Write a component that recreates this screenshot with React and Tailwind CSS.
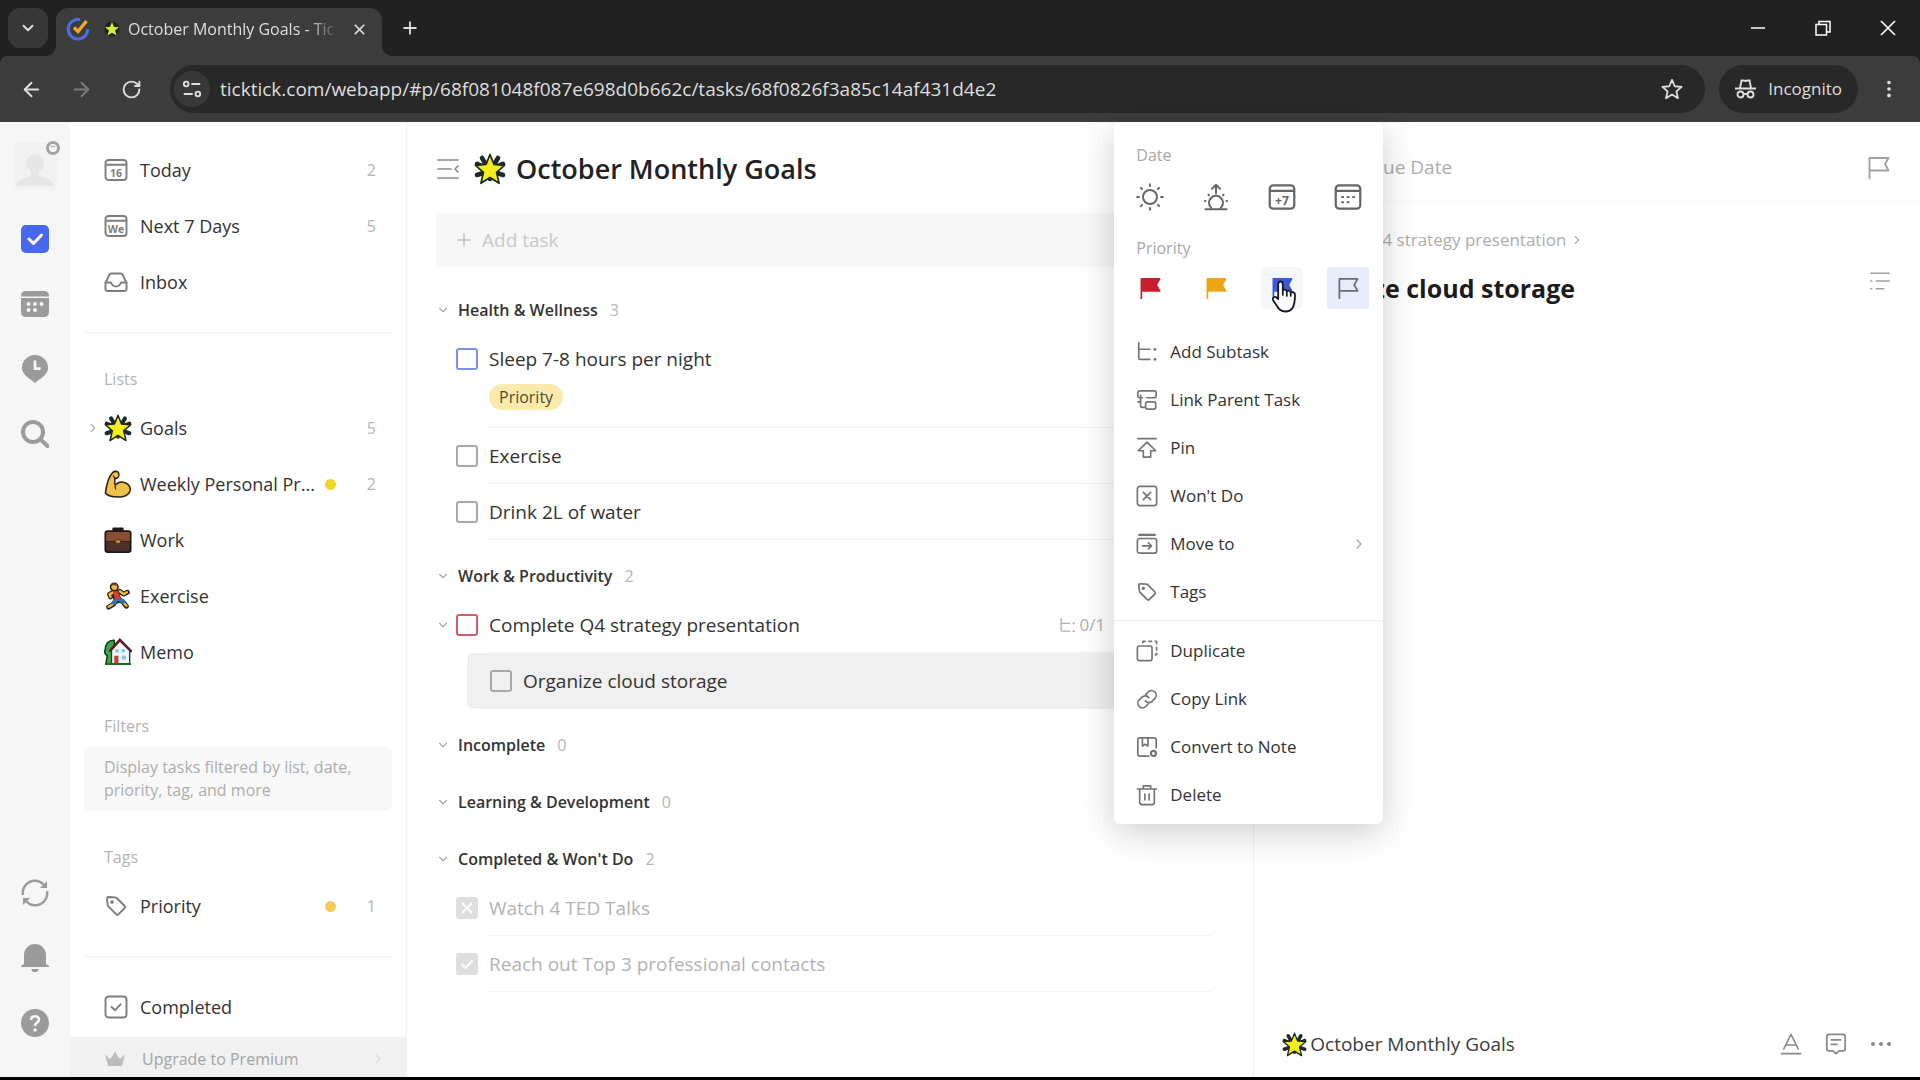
import React from "react";
import {
  ArrowLeft,
  ArrowRight,
  ChevronDown,
  ChevronRight,
  EllipsisVertical,
  Plus,
  RotateCw,
  X,
} from "lucide-react";

// Small wrapper so that every line icon shares the same stroke settings
const Icon = ({ size = 24, sw = 1.8, className = "", children }) => (
  <svg
    width={size}
    height={size}
    viewBox="0 0 24 24"
    fill="none"
    stroke="currentColor"
    strokeWidth={sw}
    strokeLinecap="round"
    strokeLinejoin="round"
    aria-hidden="true"
    className={`shrink-0 ${className}`}
  >
    {children}
  </svg>
);

const StarEmoji = ({ size = 28 }) => (
  <svg width={size} height={size} viewBox="0 0 32 32" className="shrink-0" aria-hidden="true">
    <g stroke="#1d2a2c" strokeWidth="4.6" strokeLinecap="round">
      <path d="M8 5l3 5M24 5l-3 5M3 11l5 2M29 11l-5 2M3 22l6-2M29 22l-6-2M16 26v-3" />
    </g>
    <path
      d="M16 1.5l4 10 10.5.8-8 7 2.6 11L16 24.5 6.9 30.3l2.6-11-8-7 10.500-.8z"
      fill="#f4ee1c"
      stroke="#1d2a10"
      strokeWidth="1.7"
      strokeLinejoin="round"
    />
  </svg>
);

const MuscleEmoji = () => (
  <svg width="28" height="28" viewBox="0 0 30 30" className="shrink-0" aria-hidden="true">
    <path
      d="M9.5 2.5c2-1.6 5-1.3 6 .5 1 1.9.3 4.5-1.2 5.5-1 .7-2 .6-2.6.4-.6 2.6-.4 5 .5 7.2 2.5-3 6.6-4 10.6-2.5 4.7 1.8 6.2 6 4.9 9.4-1.5 3.900-6.300 6-12.500 6-6.500 0-11.500-1.400-13.700-4.300C2.500 16.500 5 7.500 9.500 2.500z"
      fill="#f2c04c"
      stroke="#2b2210"
      strokeWidth="1.7"
      strokeLinejoin="round"
    />
    <path d="M12.2 16.1c-.5 1.5-.3 3 .4 4.2M10 6.5l2 2.4" fill="none" stroke="#2b2210" strokeWidth="1.3" strokeLinecap="round" />
  </svg>
);

const BriefcaseEmoji = () => (
  <svg width="28" height="28" viewBox="0 0 30 30" className="shrink-0" aria-hidden="true">
    <path d="M10 6V2.5h10V6" fill="#2d1d1a" stroke="#20171a" strokeWidth="2" strokeLinejoin="round" />
    <rect x="1.5" y="5.5" width="27" height="22.5" rx="2.5" fill="#4e2f28" stroke="#20171a" strokeWidth="2" />
    <path d="M2.5 7.5q0-1 1-1h23q1 0 1 1v9h-25z" fill="#8a4f33" />
    <path d="M2.5 16.5h25" stroke="#2b1a18" strokeWidth="1" />
    <path d="M11.5 15h7l-1.5 3.5h-4z" fill="#c99a2e" stroke="#3a2415" strokeWidth=".8" />
  </svg>
);

const RunnerEmoji = () => (
  <svg width="28" height="28" viewBox="0 0 30 30" className="shrink-0" aria-hidden="true">
    <g fill="none" strokeLinecap="round" strokeLinejoin="round">
      <path d="M13 19l-3 5-5 3M15 18l5 3 4 5M12 10l-6 3 1 3M17 10l4 3 4-2" stroke="#23211c" strokeWidth="5.2" />
      <path d="M12 11l2.5 8" stroke="#23211c" strokeWidth="8" />
      <path d="M12 10l-6 3 1 3M17 10l4 3 3.5-2" stroke="#eebc46" strokeWidth="2.6" />
      <path d="M13 19l-3 4.5-5 3M20 21l4 4.5" stroke="#eebc46" strokeWidth="2.6" />
      <path d="M14 18l-3.5 4.5M15 18l6 3" stroke="#2779c4" strokeWidth="4" />
      <path d="M12.5 11.5l2 5.5" stroke="#dd3b3b" strokeWidth="5.5" />
    </g>
    <circle cx="11" cy="5.3" r="4" fill="#eebc46" stroke="#3a2415" strokeWidth="1.7" />
    <path d="M7 5c0-5 8-5 8 0-2-2-6-2-8 0z" fill="#6a4423" />
  </svg>
);

const HouseEmoji = () => (
  <svg width="28" height="28" viewBox="0 0 30 30" className="shrink-0" aria-hidden="true">
    <path
      d="M11 2.5C5 2 1 7 1.5 12c-1.5 3-.5 5.5 2 7L2 28h10z"
      fill="#3aa84a"
      stroke="#173d1c"
      strokeWidth="1.7"
      strokeLinejoin="round"
    />
    <path d="M8 13l9-10 10.5 10v14.5H8z" fill="#e9f7fb" stroke="#2b3b40" strokeWidth="1.5" />
    <path d="M6.5 13.5L17 2l12 12" fill="none" stroke="#611d22" strokeWidth="2.6" strokeLinecap="round" />
    <rect x="11" y="19" width="4.5" height="8.5" fill="#c8403a" />
    <rect x="19" y="19" width="4.5" height="4" fill="#86c8d8" />
    <rect x="12" y="12" width="3.5" height="3.5" fill="#86c8d8" />
    <rect x="19" y="12" width="3.5" height="3.5" fill="#86c8d8" />
    <path d="M1 28h28" stroke="#1f6b2c" strokeWidth="2" />
  </svg>
);

const TagIcon = ({ size = 24 }) => (
  <Icon size={size} sw={1.9}>
    <path d="M3 4.5Q3 3 4.5 3l6.800.4q.8 0 1.400.6l8 8q1 1 0 2l-6.300 6.300q-1 1-2 0l-8-8q-.6-.6-.7-1.400z" />
    <circle cx="8" cy="8" r=".9" fill="currentColor" />
  </Icon>
);

const CalendarBox = ({ text, size = 24 }) => (
  <Icon size={size} sw={1.9}>
    <rect x="1.5" y="2" width="21" height="20" rx="3" />
    <path d="M2 6.8h20" />
    <text
      x="12"
      y="18.5"
      textAnchor="middle"
      fontSize="10.5"
      fontWeight="700"
      fill="currentColor"
      stroke="none"
    >
      {text}
    </text>
  </Icon>
);

const FlagIcon = ({ size = 24, fill = "none", color = "currentColor" }) => (
  <svg width={size} height={size} viewBox="0 0 24 24" className="shrink-0" aria-hidden="true">
    <path
      d="M2.5 23V2h19l-3.5 6.3 3.5 6.2h-19"
      fill={fill}
      stroke={color}
      strokeWidth="1.8"
      strokeLinejoin="round"
    />
  </svg>
);

const SubtaskIcon = ({ size = 24 }) => (
  <Icon size={size} sw={1.9}>
    <path d="M3 2v16.500q0 1.500 1.500 1.500H15M3 9h12" />
    <path d="M20.5 9h.2M20.5 20h.2" strokeWidth="3" />
  </Icon>
);

const icons = {
  parent: (
    <Icon size={22}>
      <path d="M7 9.5H4Q2 9.5 2 7.5V4q0-2 2-2h16q2 0 2 2v3.5q0 2-2 2h-8.5M5 6.5V18q0 2 2 2h3" />
      <path d="M2 14h3" />
      <rect x="10.5" y="14" width="11" height="8" rx="2" />
    </Icon>
  ),
  pin: (
    <Icon size={22}>
      <path d="M2 1.8h20M12 5.500L2.500 15H8v7h8v-7h5.500z" />
    </Icon>
  ),
  wont: (
    <Icon size={22}>
      <rect x="1.5" y="1.5" width="21" height="21" rx="2.5" />
      <path d="M8 8l8 8M16 8l-8 8" />
    </Icon>
  ),
  move: (
    <Icon size={22}>
      <rect x="1.5" y="6" width="21" height="16" rx="2.5" />
      <path d="M3.5 2h17" strokeWidth="2.6" />
      <path d="M7 14h10M13.5 10.800L17 14l-3.500 3.200" />
    </Icon>
  ),
  duplicate: (
    <Icon size={22}>
      <rect x="1.5" y="6.5" width="16" height="16" rx="2" />
      <path d="M7.5 3V1.5H10M14 1.5h3M21 1.5h1.500V4M22.500 8v3M22.500 14.500V16H21" />
    </Icon>
  ),
  copy: (
    <Icon size={22}>
      <path d="M10 14a5 5 0 0 0 7.500.5l3-3a5 5 0 0 0-7-7.200l-3 3" />
      <path d="M14 10.500a5 5 0 0 0-7.500-.5l-3 3a5 5 0 0 0 7 7.200l3-3" />
    </Icon>
  ),
  note: (
    <Icon size={22}>
      <path d="M14 22H4q-2 0-2-2V4q0-2 2-2h16q2 0 2 2v9" />
      <path d="M7 2v9l3-2 3 2V2" />
      <circle cx="19" cy="19" r="2.8" strokeWidth="2.4" />
    </Icon>
  ),
  trash: (
    <Icon size={22}>
      <path d="M1.5 5.500h21M8 5V2h8v3M4 5.500V20q0 2.500 2.500 2.500h11Q20 22.500 20 20V5.500M9.700 11v6.500M14.300 11v6.500" />
    </Icon>
  ),
};

const menuTop = [
  { label: "Add Subtask", icon: <SubtaskIcon size={22} /> },
  { label: "Link Parent Task", icon: icons.parent },
  { label: "Pin", icon: icons.pin },
  { label: "Won't Do", icon: icons.wont },
  { label: "Move to", icon: icons.move, arrow: true },
  { label: "Tags", icon: <TagIcon size={22} /> },
];

const menuBottom = [
  { label: "Duplicate", icon: icons.duplicate },
  { label: "Copy Link", icon: icons.copy },
  { label: "Convert to Note", icon: icons.note },
  { label: "Delete", icon: icons.trash },
];

const BrowserChrome = () => (
  <header className="bg-[#212121] text-[#dedede]">
    <div className="flex h-14 items-end justify-between">
      <div className="flex h-12 items-stretch">
        <button
          type="button"
          aria-label="Search tabs"
          className="mb-2 ml-2 mr-2 flex w-10 items-center justify-center rounded-xl bg-[#373737]"
        >
          <ChevronDown size={18} strokeWidth={2.6} />
        </button>
        <div className="relative flex w-[326px] items-center rounded-t-xl bg-[#3c3c3c] pb-[6px] pl-[10px] pr-[14px]">
          <svg className="absolute -left-3 bottom-0" width="12" height="12" aria-hidden="true">
            <path d="M12 0v12H0Q12 12 12 0z" fill="#3c3c3c" />
          </svg>
          <svg className="absolute -right-3 bottom-0" width="12" height="12" aria-hidden="true">
            <path d="M0 0v12h12Q0 12 0 0z" fill="#3c3c3c" />
          </svg>
          <svg width="24" height="24" viewBox="0 0 24 24" fill="none" className="shrink-0" aria-hidden="true">
            <path d="M14 2.6A9.8 9.8 0 1 0 21.800 12" stroke="#4b6be0" strokeWidth="3" />
            <path d="M8 10.500l4 4L20.500 4" stroke="#f0a92a" strokeWidth="3.4" />
          </svg>
          <span className="ml-[14px] mr-2">
            <svg width="16" height="16" viewBox="0 0 16 16" aria-hidden="true">
              <circle cx="8" cy="8" r="7.5" fill="#1e2414" />
              <path d="M8 1l2 5 5 .3-4 3.200 1.500 5L8 11.700 3.500 14.500 5 9.500 1 6.300 6 6z" fill="#d6f03a" />
            </svg>
          </span>
          <span className="flex-1 overflow-hidden whitespace-nowrap text-[16px] [mask-image:linear-gradient(to_right,black_85%,transparent)]">
            October Monthly Goals - Tic
          </span>
          <button type="button" aria-label="Close tab" className="ml-3">
            <X size={17} strokeWidth={2.4} />
          </button>
        </div>
        <button type="button" aria-label="New tab" className="mb-2 ml-[18px]">
          <Plus size={20} strokeWidth={2.2} />
        </button>
      </div>
      <div className="flex h-full items-center gap-[49px] pr-6">
        <button type="button" aria-label="Minimize">
          <svg width="16" height="16" stroke="#fff" strokeWidth="1.5" aria-hidden="true">
            <path d="M1 8h14" />
          </svg>
        </button>
        <button type="button" aria-label="Restore">
          <svg width="16" height="16" stroke="#fff" strokeWidth="1.5" fill="none" aria-hidden="true">
            <path d="M1 4.500h10.500V15H1zM4 4.500V1.500h11V12h-3.500" />
          </svg>
        </button>
        <button type="button" aria-label="Close window">
          <svg width="16" height="16" stroke="#fff" strokeWidth="1.6" aria-hidden="true">
            <path d="M1 1l14 14M15 1L1 15" />
          </svg>
        </button>
      </div>
    </div>
    <div className="flex h-[66px] items-center rounded-t-lg bg-[#3c3c3c] px-5">
      <button type="button" aria-label="Back">
        <ArrowLeft size={23} />
      </button>
      <button type="button" aria-label="Forward" className="ml-[27px] text-[#7b7b7b]">
        <ArrowRight size={23} />
      </button>
      <button type="button" aria-label="Reload" className="ml-7">
        <RotateCw size={21} strokeWidth={2.2} />
      </button>
      <div className="ml-7 flex h-12 flex-1 items-center rounded-full bg-[#282828] pl-1 pr-[22px]">
        <button
          type="button"
          aria-label="Site information"
          className="flex h-9 w-9 items-center justify-center rounded-full bg-[#383838]"
        >
          <Icon size={20} sw={2.2}>
            <circle cx="5" cy="6" r="2.8" />
            <path d="M12 6h9M3 18h9" />
            <circle cx="19" cy="18" r="2.8" />
          </Icon>
        </button>
        <input
          type="text"
          aria-label="Address bar"
          readOnly
          value="ticktick.com/webapp/#p/68f081048f087e698d0b662c/tasks/68f0826f3a85c14af431d4e2"
          className="ml-[10px] min-w-0 flex-1 bg-transparent text-[19px] outline-none"
        />
        <button type="button" aria-label="Bookmark this tab">
          <Icon size={22} sw={2}>
            <path d="M12 2l3 7 7.500.6-5.700 5 1.700 7.400L12 18l-6.500 4 1.700-7.400-5.700-5L9 9z" />
          </Icon>
        </button>
      </div>
      <div className="ml-[14px] flex h-12 items-center gap-3 rounded-full bg-[#282828] px-4 text-[17px]">
        <svg width="21" height="20" viewBox="0 0 21 20" fill="none" stroke="currentColor" strokeWidth="1.9" aria-hidden="true">
          <path d="M0 9.500h21M5 9l1.500-7.500h2L10.500 2l2-.5h2L16 9" />
          <circle cx="5.5" cy="15.5" r="3" />
          <circle cx="15.5" cy="15.5" r="3" />
          <path d="M8.500 15h4" />
        </svg>
        Incognito
      </div>
      <button type="button" aria-label="Menu" className="ml-5">
        <EllipsisVertical size={22} />
      </button>
    </div>
  </header>
);

const Rail = () => (
  <nav aria-label="Modules" className="flex w-[70px] shrink-0 flex-col items-center bg-[#f6f6f6] pb-10 pt-5 text-[#9b9b9b]">
    <div className="relative mb-[35px] h-12 w-11 rounded-md bg-[#f2f2f2]">
      <svg viewBox="0 0 44 48" className="h-12 w-11" fill="#e6e6e6" aria-label="Profile" role="img">
        <circle cx="22" cy="21" r="9" />
        <path d="M18 28h8v6q11 1 14 8v2H4v-2q3-7 14-8z" />
      </svg>
      <svg width="16" height="16" viewBox="0 0 16 16" className="absolute -right-1 -top-[2px]" aria-hidden="true">
        <circle cx="8" cy="8" r="5.5" fill="#f6f6f6" stroke="#a2a2a2" strokeWidth="3" />
        <path d="M5.500 6l2.500 1 2.500-1" stroke="#a2a2a2" strokeWidth="1" fill="none" />
      </svg>
    </div>
    <div className="flex flex-col gap-[37px]">
      <button type="button" aria-label="Tasks">
        <svg width="28" height="28" viewBox="0 0 28 28" aria-hidden="true">
          <rect width="28" height="28" rx="5" fill="#4868ef" />
          <path d="M8 14l4.500 4.500L20.500 10" fill="none" stroke="#fff" strokeWidth="3" strokeLinecap="round" strokeLinejoin="round" />
        </svg>
      </button>
      <button type="button" aria-label="Calendar">
        <svg width="28" height="28" viewBox="0 0 28 28" fill="currentColor" aria-hidden="true">
          <path d="M0 6q0-5 5-5h18q5 0 5 5v.5H0zM0 8h28v14q0 5-5 5H5q-5 0-5-5z" />
          <g fill="#f6f6f6">
            <circle cx="7.5" cy="14" r="2" />
            <circle cx="14" cy="14" r="2" />
            <circle cx="20.5" cy="14" r="2" />
            <circle cx="7.5" cy="20" r="2" />
            <circle cx="14" cy="20" r="2" />
          </g>
        </svg>
      </button>
      <button type="button" aria-label="Pomodoro">
        <svg width="28" height="28" viewBox="0 0 28 30" aria-hidden="true">
          <path d="M14 0a14 14 0 0 1 14 14c0 7-8 11-14 16C8 25 0 21 0 14A14 14 0 0 1 14 0z" fill="currentColor" />
          <path d="M14 6v8.500h6" fill="none" stroke="#f6f6f6" strokeWidth="3" />
        </svg>
      </button>
      <button type="button" aria-label="Search">
        <svg width="28" height="28" viewBox="0 0 28 28" fill="none" stroke="currentColor" strokeWidth="4" aria-hidden="true">
          <circle cx="12" cy="12" r="10" />
          <path d="M19.500 19.500l7 6.500" strokeLinecap="round" />
        </svg>
      </button>
    </div>
    <div className="mt-auto flex flex-col gap-[37px]">
      <button type="button" aria-label="Sync">
        <svg width="28" height="28" viewBox="0 0 28 28" fill="none" stroke="currentColor" strokeWidth="2.5" aria-hidden="true">
          <path d="M2 16A12 12 0 0 1 23 6M26 12A12 12 0 0 1 5 22" />
          <path d="M26 2v7h-7zM2 26v-7h7z" fill="currentColor" stroke="none" />
        </svg>
      </button>
      <button type="button" aria-label="Notifications">
        <svg width="28" height="28" viewBox="0 0 28 28" fill="currentColor" aria-hidden="true">
          <path d="M3 20V11a11 11 0 0 1 22 0v9l3 2v1H0v-1zM10 25h8q-1.500 3.500-4 3.500T10 25z" />
        </svg>
      </button>
      <button type="button" aria-label="Help">
        <svg width="28" height="28" viewBox="0 0 28 28" aria-hidden="true">
          <circle cx="14" cy="14" r="14" fill="currentColor" />
          <path d="M10 11c0-5 8-5 8-.5 0 3-4 3-4 6.500" fill="none" stroke="#f6f6f6" strokeWidth="2.6" />
          <circle cx="14" cy="21" r="1.8" fill="#f6f6f6" />
        </svg>
      </button>
    </div>
  </nav>
);

const SideRow = ({ icon, label, count, dot, expandable }) => (
  <a href="#list" className="flex h-14 items-center pl-4 pr-[30px] text-[18px] text-[#333]">
    <span className="flex w-[18px] shrink-0 text-[#aaa]">
      {expandable && <ChevronRight size={14} />}
    </span>
    <span className="flex w-9 shrink-0 text-[#7d7d7d]">{icon}</span>
    <span className="min-w-0 flex-1 whitespace-nowrap">{label}</span>
    <span className={`ml-1 h-[11px] w-[11px] shrink-0 rounded-full ${dot || "invisible"}`} />
    <span className="w-10 shrink-0 text-right text-[16px] text-[#b5b5b5]">{count}</span>
  </a>
);

const SideLabel = ({ children }) => (
  <h2 className="mb-[9px] mt-[34px] pl-[34px] text-[16px] font-medium leading-6 text-[#b3b3b3]">{children}</h2>
);

const Sidebar = () => (
  <aside className="flex w-[337px] shrink-0 flex-col border-r border-[#f2f2f2] bg-white pt-5">
    <SideRow icon={<CalendarBox text="16" />} label="Today" count={2} />
    <SideRow icon={<CalendarBox text="We" />} label="Next 7 Days" count={5} />
    <SideRow
      icon={
        <Icon size={24} sw={1.9}>
          <path d="M1.500 13L5.500 4.500Q6 3.500 7 3.500h10q1 0 1.500 1l4 8.500v6q0 2-2 2h-17q-2 0-2-2z" />
          <path d="M1.500 12.500H7q1.500 4 5 4t5-4h5.500" />
        </Icon>
      }
      label="Inbox"
    />
    <hr className="mx-[14px] mt-[22px] border-[#f3f3f3]" />
    <SideLabel>Lists</SideLabel>
    <SideRow icon={<StarEmoji />} label="Goals" count={5} expandable />
    <SideRow icon={<MuscleEmoji />} label="Weekly Personal Pr..." count={2} dot="bg-[#f0d626]" />
    <SideRow icon={<BriefcaseEmoji />} label="Work" />
    <SideRow icon={<RunnerEmoji />} label="Exercise" />
    <SideRow icon={<HouseEmoji />} label="Memo" />
    <SideLabel>Filters</SideLabel>
    <p className="mx-[14px] rounded-md bg-[#f8f8f8] py-[9px] pl-5 pr-6 text-[16px] leading-[23px] text-[#adadad]">
      Display tasks filtered by list, date, priority, tag, and more
    </p>
    <SideLabel>Tags</SideLabel>
    <SideRow icon={<TagIcon />} label="Priority" count={1} dot="bg-[#f3cc5b]" />
    <hr className="mx-[14px] my-[22px] border-[#f3f3f3]" />
    <SideRow
      icon={
        <Icon size={24} sw={1.9}>
          <rect x="1.5" y="1.5" width="21" height="21" rx="3" />
          <path d="M7.500 12l3.500 3.300 5.500-6" />
        </Icon>
      }
      label="Completed"
    />
    <a href="#premium" className="mt-auto flex h-10 items-center bg-[#f1f1f1] pl-[34px] pr-5 pt-1 text-[16px] text-[#a5a5a5]">
      <svg width="22" height="20" viewBox="0 0 22 20" fill="#bcbcbc" aria-hidden="true">
        <path d="M1 5l4.500 5L8 8l3-6 3 6 2.500 2L21 5l-3 12H4z" />
      </svg>
      <span className="ml-4 flex-1">Upgrade to Premium</span>
      <ChevronRight size={16} className="text-[#d9d9d9]" />
    </a>
  </aside>
);

const Group = ({ title, count, children }) => (
  <section>
    <h2 className="flex h-[42px] items-center text-[16px] font-semibold text-[#333]">
      <button type="button" aria-label={`Toggle ${title}`} className="mr-2 w-[14px] text-[#a5a5a5]">
        <ChevronDown size={14} />
      </button>
      {title}
      <span className="ml-3 font-normal text-[#b5b5b5]">{count}</span>
    </h2>
    {children}
  </section>
);

const Task = ({ id, title, border = "border-[#a8a8a8]", tag, done, open, meta, sub }) => (
  <div className={`flex pr-[14px] ${sub ? "ml-[31px] rounded-md bg-[#f0f0f0] pl-[23px]" : ""}`}>
    {!sub && (
      <span className="flex h-14 w-3 shrink-0 items-center text-[#a5a5a5]">
        {open && <ChevronDown size={14} className="shrink-0" />}
      </span>
    )}
    <span className={`relative flex h-14 w-[22px] shrink-0 items-center ${sub ? "" : "ml-2"}`}>
      <input
        id={id}
        type="checkbox"
        defaultChecked={Boolean(done)}
        className={`h-[22px] w-[22px] appearance-none rounded-[3px] border-2 ${done ? "border-[#dedede] bg-[#dedede]" : border}`}
      />
      {done && (
        <svg
          viewBox="0 0 22 22"
          className="pointer-events-none absolute inset-x-0 top-[17px] h-[22px] w-[22px]"
          fill="none"
          stroke="#fff"
          strokeWidth="2"
          aria-hidden="true"
        >
          <path d={done === "wont" ? "M6 6l10 10M16 6L6 16" : "M5.500 11l4 4 7-7.500"} />
        </svg>
      )}
    </span>
    <div className={`ml-[11px] min-w-0 flex-1 border-b pb-[13px] pt-[14px] ${sub ? "border-transparent" : "border-[#f4f4f4]"}`}>
      <div className="flex items-center justify-between">
        <label htmlFor={id} className={`text-[19px] leading-7 ${done ? "text-[#b3b3b3]" : "text-[#333]"}`}>
          {title}
        </label>
        {meta}
      </div>
      {tag && (
        <div className="mb-1 mt-[11px] flex">
          <span className="rounded-full bg-[#faebad] px-[10px] text-[16px] leading-[26px] text-[#514a30]">{tag}</span>
        </div>
      )}
    </div>
  </div>
);

const DateButton = ({ label, children }) => (
  <button type="button" aria-label={label} className="flex h-[42px] w-[42px] items-center justify-center text-[#666]">
    {children}
  </button>
);

const MenuItem = ({ icon, label, arrow }) => (
  <li>
    <button type="button" className="flex h-12 w-full items-center pl-[22px] pr-4 text-[17px] text-[#333]">
      <span className="mr-3 flex text-[#747474]">{icon}</span>
      <span className="flex-1 text-left">{label}</span>
      {arrow && <ChevronRight size={16} className="text-[#a8a8a8]" />}
    </button>
  </li>
);

const ContextMenu = () => (
  <div className="absolute -right-[130px] top-0 z-10 w-[269px] rounded-md bg-white pb-[5px] pt-[21px] shadow-[0_8px_36px_rgba(0,0,0,0.2)]">
    <h3 className="pl-[22px] text-[16px] leading-6 text-[#a8a8a8]">Date</h3>
    <div className="mt-[9px] flex gap-6 pl-[15px]">
      <DateButton label="Today">
        <Icon size={28} sw={1.7}>
          <circle cx="12" cy="12" r="6" />
          <path d="M12 1v1.500M12 21.500V23M1 12h1.500M21.500 12H23M4.200 4.200l1 1M18.800 18.800l1 1M4.200 19.800l1-1M18.800 5.200l1-1" />
        </Icon>
      </DateButton>
      <DateButton label="Tomorrow">
        <Icon size={28} sw={1.7}>
          <path d="M12 9V2M8.500 5L12 1.500 15.500 5M3 22.500h18" />
          <path d="M8 21.500a6 6 0 1 1 8 0M5.500 10l.5.500M18.500 10l-.5.500M2.500 15.500H3M21.500 15.500H21" />
        </Icon>
      </DateButton>
      <DateButton label="Next week">
        <CalendarBox text="+7" size={28} />
      </DateButton>
      <DateButton label="Pick a date">
        <Icon size={28} sw={1.9}>
          <rect x="1.5" y="2" width="21" height="20" rx="3" />
          <path d="M2 6.800h20" />
          <path d="M7 12h.8M11.700 12h.8M16.400 12h.8M7 16.500h.8M11.700 16.500h.8" />
        </Icon>
      </DateButton>
    </div>
    <h3 className="mt-[18px] pl-[22px] text-[16px] leading-6 text-[#a8a8a8]">Priority</h3>
    <div className="mt-[7px] flex gap-6 pl-[15px]">
      <button type="button" aria-label="High priority" className="flex h-[42px] w-[42px] items-center justify-center">
        <FlagIcon size={23} color="#c71f2d" fill="#c71f2d" />
      </button>
      <button type="button" aria-label="Medium priority" className="flex h-[42px] w-[42px] items-center justify-center">
        <FlagIcon size={23} color="#eda615" fill="#eda615" />
      </button>
      <button type="button" aria-label="Low priority" className="relative flex h-[42px] w-[42px] items-center justify-center rounded-md bg-[#f5f6f8]">
        <FlagIcon size={23} color="#3d58db" fill="#3d58db" />
        {/* mouse pointer */}
        <svg width="28" height="34" viewBox="0 0 28 34" className="absolute left-[10px] top-3" aria-hidden="true">
          <path
            d="M9.500 2.500c1.500 0 2.300 1 2.300 2.500v6.500c.5-1.300 3.700-1.200 4 .8.900-1.200 3.700-.8 3.900 1.200 1.500-1 4.300-.2 4.300 2.500 0 6-.5 9.500-2.500 13-1.500 2.500-3.500 3.500-7 3.500-4 0-6.500-1.500-8.500-5.500L2 21c-1-2 1.500-4 3.500-2.500l1.700 1.700V5c0-1.500.8-2.500 2.300-2.500z"
            fill="#fff"
            stroke="#15171f"
            strokeWidth="1.8"
            strokeLinejoin="round"
          />
          <path d="M11.800 11v5M15.800 12.500V17M19.700 13.500V17" stroke="#15171f" strokeWidth="1.7" strokeLinecap="round" />
        </svg>
      </button>
      <button
        type="button"
        aria-label="No priority"
        aria-pressed="true"
        className="flex h-[42px] w-[42px] items-center justify-center rounded-sm bg-[#e9ecfb] text-[#666a7a]"
      >
        <FlagIcon size={23} />
      </button>
    </div>
    <ul className="mt-[19px]">
      {menuTop.map((item) => (
        <MenuItem key={item.label} {...item} />
      ))}
    </ul>
    <hr className="mb-[6px] mt-1 border-[#f0f0f0]" />
    <ul>
      {menuBottom.map((item) => (
        <MenuItem key={item.label} {...item} />
      ))}
    </ul>
  </div>
);

const TaskList = () => (
  <main className="relative border-r border-[#f0f0f0] pl-[29px] pr-7 pt-[25px]">
    <h1 className="flex h-11 items-center text-[27px] font-semibold text-[#222]">
      <button type="button" aria-label="Collapse sidebar" className="mr-[14px] text-[#8a8a8a]">
        <Icon size={24} sw={1.7}>
          <path d="M2 3h20M2 12h13M2 21h20M22 9l-3 3 3 3" />
        </Icon>
      </button>
      <StarEmoji size={32} />
      <span className="ml-[10px]">October Monthly Goals</span>
    </h1>
    <div className="mt-[22px] flex h-[54px] items-center rounded-md bg-[#f7f7f7] pl-[18px]">
      <Plus size={20} strokeWidth={1.7} className="text-[#bdbdbd]" />
      <input
        type="text"
        aria-label="Add task"
        placeholder="Add task"
        className="ml-2 flex-1 bg-transparent text-[19px] outline-none placeholder:text-[#c8c8c8]"
      />
    </div>
    <div className="mt-[22px] flex flex-col gap-[15px]">
      <Group title="Health & Wellness" count={3}>
        <Task id="sleep" title="Sleep 7-8 hours per night" border="border-[#8090e8]" tag="Priority" />
        <Task id="exercise" title="Exercise" />
        <Task id="water" title="Drink 2L of water" />
      </Group>
      <Group title="Work & Productivity" count={2}>
        <Task
          id="q4"
          title="Complete Q4 strategy presentation"
          border="border-[#d65a6c]"
          open
          meta={
            <span className="mr-[106px] flex items-center gap-1 text-[17px] text-[#b0b0b0]">
              <SubtaskIcon size={17} />
              0/1
            </span>
          }
        />
        <Task id="cloud" title="Organize cloud storage" sub />
      </Group>
      <Group title="Incomplete" count={0} />
      <Group title="Learning & Development" count={0} />
      <Group title="Completed & Won't Do" count={2}>
        <Task id="ted" title="Watch 4 TED Talks" done="wont" />
        <Task id="contacts" title="Reach out Top 3 professional contacts" done="done" />
      </Group>
    </div>
    <ContextMenu />
  </main>
);

const Detail = () => (
  <section aria-label="Task detail" className="flex flex-col">
    <div className="flex h-20 items-center justify-between border-b border-[#f8f8f8] pl-[115px] pr-[29px] pt-3">
      <button type="button" className="text-[19px] text-[#adadad]">
        Due Date
      </button>
      <button type="button" aria-label="Set priority" className="text-[#a0a0a0]">
        <FlagIcon />
      </button>
    </div>
    <a href="#parent" className="mt-6 flex items-center gap-1 pl-[34px] text-[17px] leading-7 text-[#adadad]">
      Complete Q4 strategy presentation
      <ChevronRight size={14} />
    </a>
    <div className="mt-4 flex items-start justify-between pl-[34px] pr-[29px]">
      <h2 className="text-[25px] font-bold leading-9 text-[#1c1c1c]">Organize cloud storage</h2>
      <button type="button" aria-label="Switch to checklist" className="text-[#a0a0a0]">
        <Icon size={22} sw={1.8}>
          <path d="M2 3.500h20M8 12h14M2 12h1M2 20.500h1M8 20.500h8" />
        </Icon>
      </button>
    </div>
    <div className="mt-auto flex h-[66px] items-center px-7 text-[#8a8a8a]">
      <button type="button" className="flex items-center gap-[3px] text-[19px] text-[#3c3c3c]">
        <StarEmoji size={25} />
        October Monthly Goals
      </button>
      <div className="ml-auto flex items-center gap-[23px]">
        <button type="button" aria-label="Text format">
          <Icon size={22} sw={1.7}>
            <path d="M4 17.500L12 1.500l8 16M7 13h10M1.500 22.500h21" />
          </Icon>
        </button>
        <button type="button" aria-label="Comments">
          <Icon size={22} sw={1.9}>
            <path d="M4 1.500h16q2 0 2 2v14q0 2-2 2h-4.500L12 22.500l-3.500-3H4q-2 0-2-2v-14q0-2 2-2zM7 7.500h10M7 12.500h6" />
          </Icon>
        </button>
        <button type="button" aria-label="More options">
          <svg width="22" height="22" fill="currentColor" aria-hidden="true">
            <circle cx="3" cy="11" r="2" />
            <circle cx="11" cy="11" r="2" />
            <circle cx="19" cy="11" r="2" />
          </svg>
        </button>
      </div>
    </div>
  </section>
);

const App = () => (
  <div className="flex min-h-screen flex-col border-b-[3px] border-black bg-white font-['Open_Sans','Noto_Sans',sans-serif]">
    <BrowserChrome />
    <div className="flex flex-1">
      <Rail />
      <Sidebar />
      <div className="grid flex-1 grid-cols-[56fr_44fr]">
        <TaskList />
        <Detail />
      </div>
    </div>
  </div>
);

export default App;
